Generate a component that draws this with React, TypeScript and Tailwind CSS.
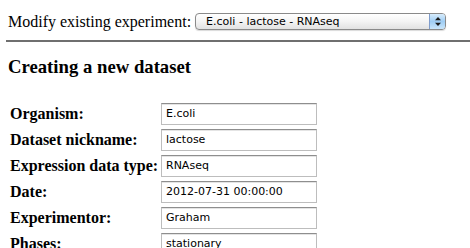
import React from "react";

const fields = [
  { label: "Organism:", value: "E.coli" },
  { label: "Dataset nickname:", value: "lactose" },
  { label: "Expression data type:", value: "RNAseq" },
  { label: "Date:", value: "2012-07-31 00:00:00" },
  { label: "Experimentor:", value: "Graham" },
  { label: "Phases:", value: "stationary" },
];

function AquaSelect() {
  return (
    <div className="ml-[4px] flex h-[17px] w-[251px] items-stretch overflow-hidden rounded-[4px] border border-[#8a8a8a] bg-gradient-to-b from-white via-[#f4f4f4] to-[#e2e2e2] shadow-[0_1px_1px_rgba(0,0,0,0.15)]">
      <span className="flex-1 pl-[10px] font-['DejaVu_Sans',sans-serif] text-[11px] leading-[16px] text-black">
        E.coli - lactose - RNAseq
      </span>
      <span className="flex w-[16px] items-center justify-center border-l border-[#7f9ccb] bg-gradient-to-b from-[#d7ecfc] via-[#9fcdf4] to-[#c9e6fb]">
        <svg width="6" height="9" viewBox="0 0 6 9">
          <path d="M3 0 L6 3.2 L0 3.2 Z" fill="#1a1a1a" />
          <path d="M3 9 L6 5.8 L0 5.8 Z" fill="#1a1a1a" />
        </svg>
      </span>
    </div>
  );
}

export default function App() {
  return (
    <div className="h-[248px] w-[470px] overflow-hidden bg-white font-['Liberation_Serif',serif] text-black">
      {/* Experiment picker */}
      <div className="mt-[12px] flex h-[19px] items-center pl-[8px] text-[16px]">
        <span className="leading-[18px]">Modify existing experiment:</span>
        <AquaSelect />
      </div>
      <div className="ml-[6px] mt-[9px] border-t-[2px] border-[#6f6f6f]" />

      <h3 className="mt-[14px] pl-[8px] text-[18.72px] font-bold leading-[22px]">
        Creating a new dataset
      </h3>

      {/* Form table */}
      <div className="mt-[23px] flex flex-col pl-[10px]">
        {fields.map((f) => (
          <div key={f.label} className="flex h-[26px] shrink-0 items-center">
            <span className="w-[151px] text-[16px] font-bold leading-[18px]">{f.label}</span>
            <div className="flex h-[22px] w-[156px] items-center border border-[#bdbdbd] border-t-[#8e8e8e] bg-white pl-[4px] font-['DejaVu_Sans',sans-serif] text-[11px] text-black shadow-[inset_0_1px_0_#e4e4e4]">
              {f.value}
            </div>
          </div>
        ))}
      </div>
    </div>
  );
}
